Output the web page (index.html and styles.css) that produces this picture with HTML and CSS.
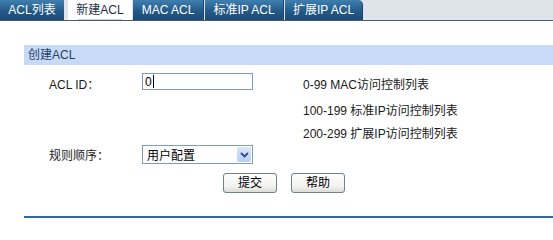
FILE: index.html
```html
<!DOCTYPE html>
<html lang="zh-CN">
<head>
<meta charset="utf-8">
<title>新建ACL</title>
<link rel="stylesheet" href="styles.css">
</head>
<body>
<div class="tabs">
  <div class="tab t1">ACL列表</div>
  <div class="tab active t2">新建ACL</div>
  <div class="tab t3">MAC ACL</div>
  <div class="tab t4">标准IP ACL</div>
  <div class="tab t5 last">扩展IP ACL</div>
</div>
<div class="section">
  <div class="section-title">创建ACL</div>
  <div class="form">
    <div class="label">ACL ID：</div>
    <div class="field"><div class="input"><span class="val">0</span><span class="caret"></span></div></div>
    <div class="desc">0-99 MAC访问控制列表</div>
    <div></div><div></div>
    <div class="desc">100-199 标准IP访问控制列表</div>
    <div></div><div></div>
    <div class="desc">200-299 扩展IP访问控制列表</div>
    <div class="label">规则顺序：</div>
    <div class="field">
      <div class="select"><span class="sel-text">用户配置</span>
        <span class="sel-btn"><svg width="9" height="6" viewBox="0 0 9 6"><path d="M1 1 L4.5 4.5 L8 1" fill="none" stroke="#2a4a8a" stroke-width="1.8"/></svg></span>
      </div>
    </div>
    <div></div>
  </div>
  <div class="buttons">
    <div class="btn">提交</div>
    <div class="btn">帮助</div>
  </div>
  <div class="bottom-line"></div>
</div>
</body>
</html>
```
FILE: styles.css
```css
html, body {
  margin: 0;
  padding: 0;
  background: #ffffff;
}
body {
  font-family: "Liberation Sans", "Noto Sans CJK SC", sans-serif;
  font-size: 12px;
  color: #000;
  width: 553px;
  height: 218px;
  overflow: hidden;
}
.tabs {
  display: flex;
  height: 20px;
  background: #dfe3ea;
  border-bottom: 1px solid #4d5d6e;
}
.tab {
  height: 20px;
  line-height: 20px;
  text-align: center;
  color: #ffffff;
  background: linear-gradient(#3f7fb0, #245a88 55%, #1b4a74);
  border-right: 1px solid #17406a;
  box-sizing: border-box;
}
.t1 { width: 64px; margin-right: 4px; border-right: none; }
.t2 { width: 64px; margin-right: 1px; }
.t3 { width: 71px; margin-right: 1px; }
.t4 { width: 79px; margin-right: 1px; }
.t5 { width: 78px; border-top-right-radius: 5px; }
.tab.active {
  background: #ffffff;
  color: #1b2f45;
  border-right: none;
  position: relative;
}
.tab.active::after {
  content: "";
  position: absolute;
  left: 10px;
  right: 10px;
  bottom: 0;
  height: 1px;
  background: #c9ced6;
}
.section {
  margin-left: 24px;
  margin-top: 24px;
}
.section-title {
  height: 20px;
  line-height: 20px;
  background: #c8daf8;
  color: #22406a;
  padding-left: 4px;
}
.form {
  display: grid;
  grid-template-columns: 93px 161px 1fr;
  grid-template-rows: 26px 26px 21px 23px;
  margin-left: 25px;
  margin-top: 5px;
  align-items: center;
}
.label {
  color: #1a1a1a;
}
.desc {
  color: #1a1a1a;
}
.field {
  align-self: center;
}
.input {
  width: 111px;
  height: 17px;
  box-sizing: border-box;
  border: 1px solid #7f9db9;
  background: #fff;
  display: flex;
  align-items: center;
  padding-left: 2px;
  margin-top: -3px;
}
.val { line-height: 14px; }
.caret {
  display: inline-block;
  width: 1px;
  height: 13px;
  background: #000;
  margin-left: 1px;
}
.select {
  width: 111px;
  height: 19px;
  box-sizing: border-box;
  border: 1px solid #7f9db9;
  background: #fff;
  display: flex;
  align-items: center;
  justify-content: space-between;
  padding-left: 4px;
  padding-right: 1px;
}
.sel-btn {
  width: 14px;
  height: 15px;
  background: linear-gradient(#dbe6fd, #b8ccf6);
  border-radius: 2px;
  display: flex;
  align-items: center;
  justify-content: center;
}
.buttons {
  display: flex;
  gap: 14px;
  margin-left: 199px;
  margin-top: 7px;
}
.btn {
  width: 54px;
  height: 20px;
  box-sizing: border-box;
  border: 1px solid #6e7f90;
  border-radius: 3px;
  background: linear-gradient(#ffffff, #f1f1ee 70%, #dcdcd6);
  text-align: center;
  line-height: 18px;
  color: #000;
}
.bottom-line {
  margin-top: 23px;
  height: 2px;
  background: #2f6a9a;
}
```
